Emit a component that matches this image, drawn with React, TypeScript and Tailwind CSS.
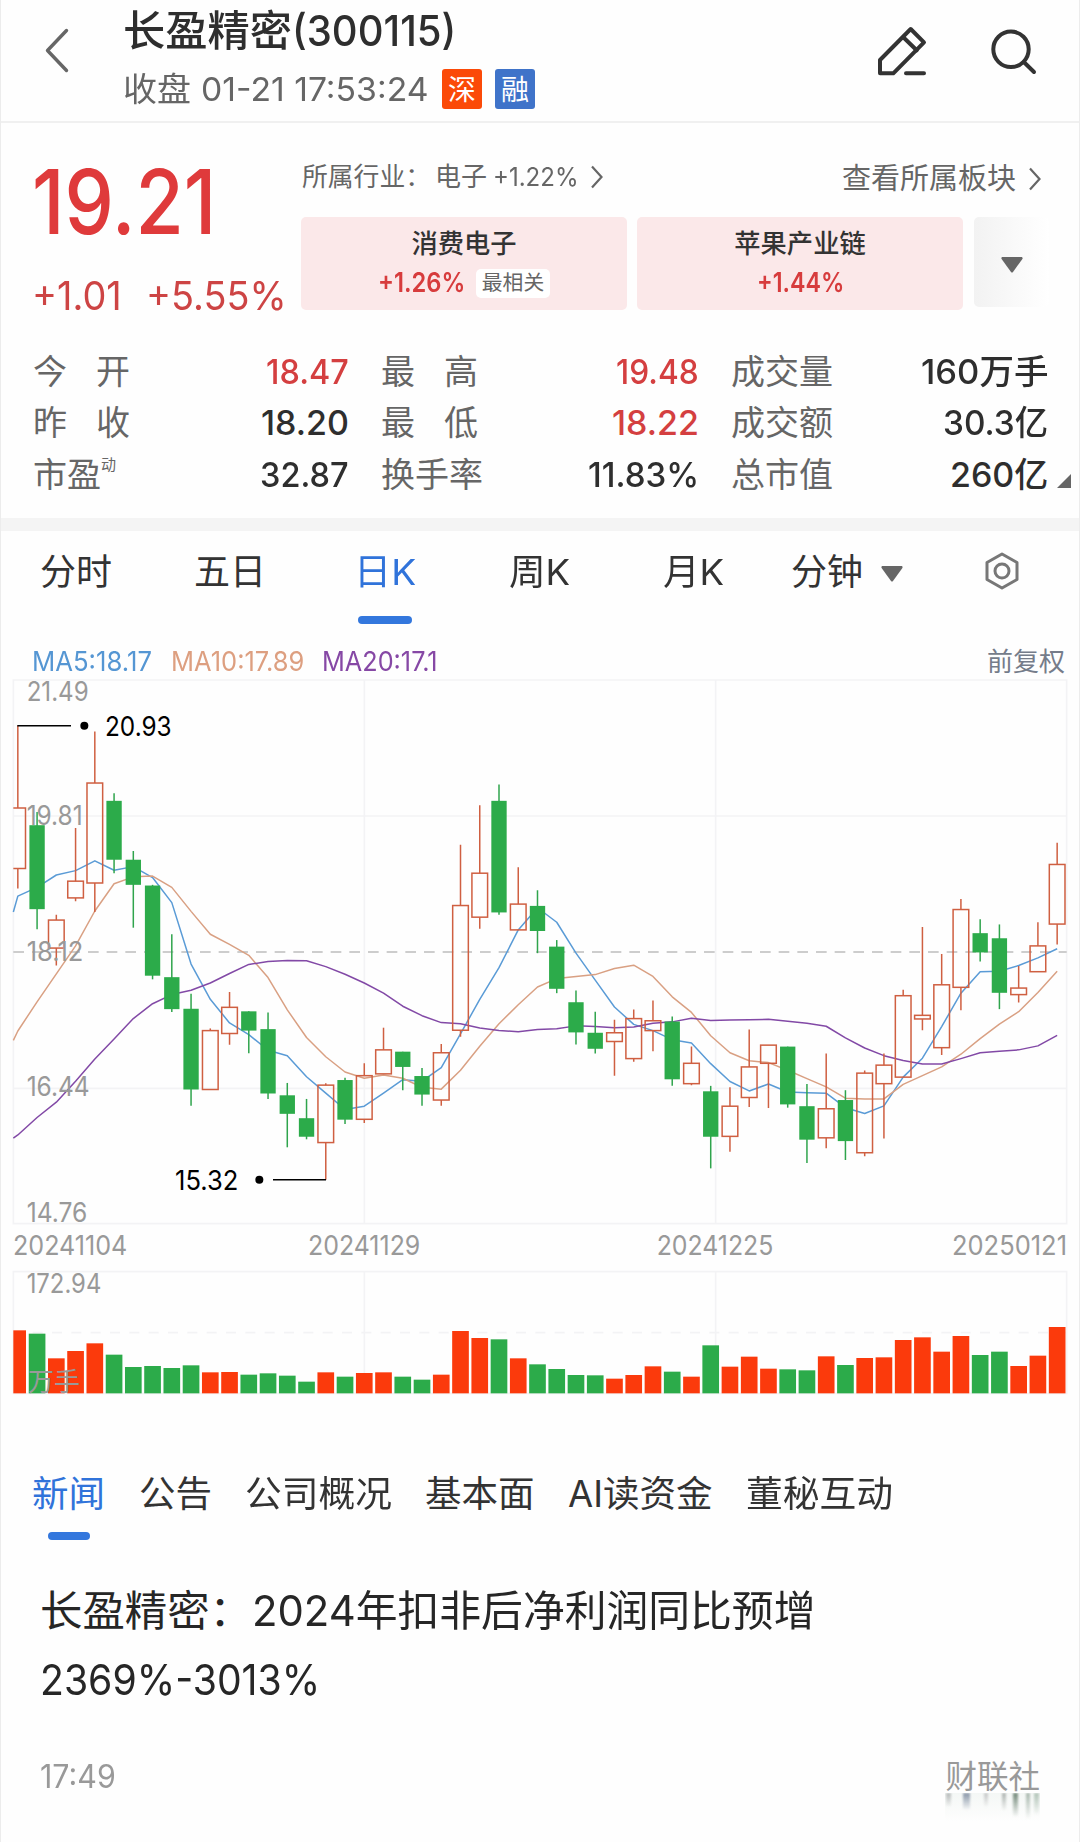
import { useLayoutEffect, useRef, useState } from 'react';
import type { ReactNode } from 'react';

type Candle = [up: number, high: number, top: number, bottom: number, low: number];

const candles: Candle[] = [
  [1, 152, 379, 545, 600], [0, 390, 426, 657, 712], [1, 672, 687, 764, 812], [1, 434, 580, 626, 635],
  [1, 168, 310, 585, 665], [0, 338, 359, 521, 558], [0, 497, 521, 590, 708], [0, 590, 592, 840, 850],
  [0, 726, 844, 932, 940], [0, 890, 931, 1153, 1198], [1, 985, 991, 1153, 1153], [1, 885, 927, 999, 1030],
  [0, 938, 938, 991, 1053], [0, 941, 987, 1164, 1179], [0, 1135, 1169, 1220, 1312], [0, 1179, 1232, 1283, 1290],
  [1, 1136, 1141, 1299, 1401], [0, 1121, 1127, 1236, 1248], [1, 1081, 1115, 1235, 1245], [1, 983, 1044, 1110, 1110],
  [0, 1049, 1049, 1091, 1155], [0, 1094, 1116, 1167, 1198], [1, 1028, 1052, 1182, 1198], [1, 480, 647, 990, 1008],
  [1, 371, 558, 679, 711], [0, 314, 359, 666, 672], [1, 542, 643, 714, 714], [0, 605, 648, 717, 778],
  [0, 742, 760, 876, 888], [0, 881, 913, 996, 1029], [0, 939, 997, 1041, 1054], [1, 961, 997, 1021, 1115],
  [1, 933, 958, 1068, 1077], [1, 908, 964, 991, 1048], [0, 952, 966, 1125, 1143], [1, 1035, 1081, 1137, 1141],
  [0, 1143, 1158, 1283, 1370], [1, 1147, 1199, 1282, 1324], [1, 988, 1091, 1175, 1201], [1, 1031, 1031, 1081, 1204],
  [0, 1035, 1035, 1194, 1203], [0, 1138, 1199, 1291, 1355], [1, 1054, 1206, 1286, 1315], [0, 1155, 1182, 1295, 1347],
  [1, 1101, 1108, 1327, 1337], [1, 1054, 1086, 1137, 1288], [1, 879, 895, 1119, 1119], [1, 706, 949, 959, 990],
  [1, 780, 865, 1038, 1058], [1, 629, 658, 872, 935], [0, 685, 723, 776, 801], [0, 699, 737, 887, 932],
  [1, 813, 874, 892, 914], [1, 693, 758, 829, 829], [1, 474, 534, 698, 754],
];

const ma5 = [
  621, 597, 563, 551, 524, 550, 540, 570, 639, 808, 905, 970, 1002, 1045, 1060, 1118, 1163, 1208, 1199, 1163, 1126,
  1130, 1093, 1000, 905, 818, 714, 653, 693, 778, 852, 926, 974, 991, 1016, 1025, 1082, 1131, 1157, 1138, 1160, 1162,
  1163, 1203, 1219, 1198, 1119, 1067, 980, 888, 829, 828, 812, 791, 766,
];
const ma10 = [
  992, 912, 835, 758, 662, 587, 568, 566, 597, 663, 726, 754, 784, 845, 934, 1010, 1063, 1105, 1122, 1113, 1122,
  1147, 1152, 1100, 1034, 972, 920, 871, 848, 842, 837, 820, 811, 842, 898, 941, 1005, 1052, 1074, 1079, 1100, 1123,
  1146, 1177, 1179, 1179, 1139, 1115, 1091, 1056, 1013, 973, 939, 886, 828,
];
const ma20 = [
  1278, 1230, 1188, 1130, 1069, 1014, 958, 917, 892, 880, 860, 834, 809, 801, 798, 799, 815, 836, 860, 888, 924,
  950, 969, 972, 984, 991, 994, 988, 986, 978, 980, 983, 981, 971, 967, 957, 963, 962, 961, 960, 965, 971,
  979, 1011, 1039, 1060, 1073, 1083, 1083, 1068, 1052, 1048, 1044, 1033, 1004,
];

const volumes = [
  189, 179, 105, 127, 150, 116, 79, 82, 76, 84, 63, 64, 56, 60, 53, 35, 63, 50, 61, 63, 50, 41, 56, 187, 166, 162,
  105, 87, 73, 55, 54, 44, 55, 81, 65, 50, 144, 80, 110, 74, 72, 69, 111, 85, 106, 108, 160, 168, 125, 172, 115, 125,
  82, 113, 199,
];

// chart space: 3 units per pixel
const cx = (i: number) => 53.5 + i * 57.74;
const py = (v: number) => Math.round(v * 10.906) / 10 + 1;
const linePath = (values: number[], start: number) =>
  `M40 ${py(start)} ` + values.map((v, i) => `L${cx(i).toFixed(1)} ${py(v)}`).join(' ');

interface FitProps {
  w: number;
  className?: string;
  children: ReactNode;
}

// Squeezes a single line of text into a fixed width
function Fit({ w, className = '', children }: FitProps) {
  const ref = useRef<HTMLSpanElement>(null);
  const [scale, setScale] = useState(1);

  useLayoutEffect(() => {
    if (ref.current) setScale(w / ref.current.offsetWidth);
  }, [w]);

  return (
    <span className={`inline-block shrink-0 whitespace-nowrap ${className}`} style={{ width: w }}>
      <span ref={ref} className="inline-block origin-left" style={{ transform: `scaleX(${scale})` }}>
        {children}
      </span>
    </span>
  );
}

function Chevron({ className = '' }: { className?: string }) {
  return (
    <svg className={className} width="14" height="24" viewBox="0 0 14 24" fill="none" stroke="#666" strokeWidth="2.2">
      <path d="M2 1.5 11.5 12 2 22.5" />
    </svg>
  );
}

function Header() {
  return (
    <header className="flex h-[123px] border-b-2 border-[#f0f0f0]">
      <svg className="mt-[28px] ml-[44px] shrink-0" width="26" height="45" viewBox="0 0 26 45" fill="none" stroke="#666" strokeWidth="3.4" strokeLinecap="round" strokeLinejoin="round">
        <path d="M22.5 2.5 3.5 22.5 22.5 42.5" />
      </svg>
      <div className="ml-[53px] flex-1">
        <div className="mt-[5px] flex h-[52px] text-[42px] leading-[52px] font-medium text-[#2e2e2e]">
          <Fit w={169}>长盈精密</Fit>
          <Fit w={164}>(300115)</Fit>
        </div>
        <div className="mt-[12px] flex h-[40px] items-center text-[33px] leading-[40px] text-[#666]">
          <Fit w={68}>收盘</Fit>
          <Fit w={228} className="ml-[10px]">01-21 17:53:24</Fit>
          <span className="ml-[13px] flex h-10 w-10 items-center justify-center rounded-[3px] bg-[#fb4a08] pt-px text-[28px] text-white">深</span>
          <span className="ml-[13px] flex h-10 w-10 items-center justify-center rounded-[3px] bg-[#3f73c9] pt-px text-[28px] text-white">融</span>
        </div>
      </div>
      <svg className="mt-[24px] shrink-0" width="56" height="56" viewBox="1 0 56 56" fill="none" stroke="#333" strokeWidth="4" strokeLinecap="round" strokeLinejoin="round">
        <path d="M36.7 5 50 18.3 19.3 49.3H6V36Z" />
        <path d="M29.3 13.3 42.7 26.3M32 49.2H50" />
      </svg>
      <svg className="mr-[37px] ml-[56px] mt-[24px] shrink-0" width="56" height="56" viewBox="1 0 56 56" fill="none" stroke="#333" strokeWidth="4" strokeLinecap="round">
        <circle cx="25" cy="25.3" r="17.7" />
        <path d="M37.8 38 48 48" />
      </svg>
    </header>
  );
}

function Quote() {
  return (
    <section className="flex h-[206px]">
      <div className="w-[301px] pl-[32px] text-[#df3a3b]">
        <div className="mt-[34px] h-[90px] text-[89px] leading-[90px] font-medium">
          <Fit w={184}>19.21</Fit>
        </div>
        <div className="mt-[25px] flex h-[48px] text-[40px] leading-[48px] text-[#cd4444]">
          <Fit w={90}>+1.01</Fit>
          <Fit w={141} className="ml-[24px]">+5.55%</Fit>
        </div>
      </div>
      <div className="flex-1">
        <div className="mt-[36px] flex h-[36px] items-center text-[26px] leading-[36px] text-[#666]">
          <span className="ml-px w-[133px] text-[25.8px]">所属行业：</span>
          <span className="w-[58px]">电子</span>
          <Fit w={86}>+1.22%</Fit>
          <Chevron className="ml-[11px]" />
          <span className="mt-[4px] ml-auto text-[29px]">查看所属板块</span>
          <Chevron className="mt-[3px] mr-[38px] ml-[12px]" />
        </div>
        <div className="mt-[22px] flex">
          <div className="h-[93px] w-[326px] rounded-[5px] bg-[#fbe8e9] pt-[8px] text-center">
            <div className="text-[26.3px] leading-[38px] font-medium text-[#333]">消费电子</div>
            <div className="mt-[2px] flex h-[36px] items-center justify-center gap-[11px]">
              <Fit w={87} className="text-left text-[27px] font-semibold text-[#d73c3d]">+1.26%</Fit>
              <span className="flex h-[29px] w-[74px] items-center justify-center rounded-[5px] bg-white text-[20.8px] text-[#666]">最相关</span>
            </div>
          </div>
          <div className="ml-[10px] h-[93px] w-[326px] rounded-[5px] bg-[#fbe8e9] pt-[8px] text-center">
            <div className="text-[26.3px] leading-[38px] font-medium text-[#333]">苹果产业链</div>
            <div className="mt-[2px] flex h-[36px] items-center justify-center">
              <Fit w={87} className="text-left text-[27px] font-semibold text-[#d73c3d]">+1.44%</Fit>
            </div>
          </div>
          <div className="ml-[11px] flex h-[90px] w-[75px] items-center rounded-[5px] bg-linear-to-r from-[#f2f2f2] to-white pt-[5px] pl-[27px]">
            <svg width="22" height="16" viewBox="0 0 22 16" fill="#666">
              <path d="M1 0H21Q22 1 21.4 2L12 15Q11 16 10 15L.6 2Q0 1 1 0Z" />
            </svg>
          </div>
        </div>
      </div>
    </section>
  );
}

interface Stat {
  label: string;
  value: string;
  w: number;
  red?: boolean;
  sup?: string;
}

const stats: Stat[][] = [
  [
    { label: '今开', value: '18.47', w: 83, red: true },
    { label: '昨收', value: '18.20', w: 88 },
    { label: '市盈', value: '32.87', w: 89, sup: '动' },
  ],
  [
    { label: '最高', value: '19.48', w: 83, red: true },
    { label: '最低', value: '18.22', w: 87, red: true },
    { label: '换手率', value: '11.83%', w: 111 },
  ],
  [
    { label: '成交量', value: '160万手', w: 127 },
    { label: '成交额', value: '30.3亿', w: 105 },
    { label: '总市值', value: '260亿', w: 98 },
  ],
];

const columnClass = ['ml-[33px] w-[316px]', 'ml-[32px] w-[318px]', 'ml-[32px] w-[317px]'];

function Stats() {
  return (
    <section className="relative flex h-[189px] pt-[17px]">
      {stats.map((column, c) => (
        <div key={c} className={columnClass[c]}>
          {column.map(({ label, value, w, red, sup }) => (
            <div key={label} className="flex h-[51.5px] items-center justify-between text-[34px] leading-[50px]">
              <span className="flex text-[#666]">
                {label.length === 2 && !sup ? (
                  <span className="flex gap-[29px]">
                    <span>{label[0]}</span>
                    <span>{label[1]}</span>
                  </span>
                ) : (
                  label
                )}
                {sup && <span className="-mt-[10px] text-[15px]">{sup}</span>}
              </span>
              <Fit w={w} className={`text-left font-medium ${red ? 'text-[#d43f40]' : 'text-[#2e2e2e]'}`}>{value}</Fit>
            </div>
          ))}
        </div>
      ))}
      <svg className="absolute top-[145px] left-[1057px]" width="15" height="15" viewBox="0 0 15 15" fill="#666">
        <path d="M14 0V14H0Z" />
      </svg>
    </section>
  );
}

function PeriodTabs() {
  return (
    <nav className="flex h-[98px] items-start pt-[16px] text-[36px] leading-[50px] text-[#333]">
      <span className="ml-[40px] w-[154px]">分时</span>
      <span className="w-[160px]">五日</span>
      <span className="w-[155px] text-[#3073da]">
        <Fit w={62}>日K</Fit>
        <span className="mt-[19px] ml-[4px] block h-[8px] w-[54px] rounded-full bg-[#3377dd]" />
      </span>
      <span className="w-[154px]"><Fit w={61}>周K</Fit></span>
      <span className="w-[128px]"><Fit w={61}>月K</Fit></span>
      <span>分钟</span>
      <svg className="mt-[19px] ml-[18px]" width="22" height="16" viewBox="0 0 22 16" fill="#666">
        <path d="M1 0H21Q22 1 21.4 2L12 15Q11 16 10 15L.6 2Q0 1 1 0Z" />
      </svg>
      <svg className="mt-[4px] ml-[80px]" width="38" height="40" viewBox="0 0 38 40" fill="none" stroke="#777" strokeWidth="3" strokeLinejoin="round">
        <path d="M19 3 34 11.5V28.5L19 37 4 28.5V11.5Z" />
        <circle cx="19" cy="20" r="7" />
      </svg>
    </nav>
  );
}

function MaLegend() {
  return (
    <div className="flex h-[41px] items-center pt-[24px] pl-[32px] text-[27px] leading-[34px]">
      <Fit w={120} className="text-[#5596d3]">MA5:18.17</Fit>
      <Fit w={133} className="ml-[19px] text-[#dd9f80]">MA10:17.89</Fit>
      <Fit w={116} className="ml-[18px] text-[#8648a5]">MA20:17.1</Fit>
      <span className="mr-[15px] ml-auto text-[26px] text-[#757c8a]">前复权</span>
    </div>
  );
}

const priceLabels = [
  { text: '21.49', x: 80, y: 94, w: 186 },
  { text: '19.81', x: 80, y: 464, w: 168 },
  { text: '18.12', x: 80, y: 873, w: 170 },
  { text: '16.44', x: 80, y: 1279, w: 189 },
  { text: '14.76', x: 80, y: 1656, w: 182 },
];

const dateLabels = [
  { text: '20241104', x: 39, w: 343 },
  { text: '20241129', x: 924, w: 337 },
  { text: '20241225', x: 1970, w: 350 },
  { text: '20250121', x: 2856, w: 345 },
];

function KLineChart() {
  return (
    <svg width="1080" height="740" viewBox="0 0 3240 2220" fill="none" fontSize="79">
      {/* price grid */}
      <g stroke="#f3f3f5" strokeWidth="5">
        <path d="M40 30H3200V1661H40ZM40 438H3200M40 1255H3200M1093 30V1661M2147 30V1661" />
        <path d="M40 1805H3200V2170H40ZM1093 1805V2170M2147 1805V2170" />
        <path d="M40 1988H3200" strokeDasharray="30 28" />
      </g>
      <path d="M40 846H3200" stroke="#bdbdbd" strokeWidth="4" strokeDasharray="32 24" />

      {/* moving averages */}
      <g strokeWidth="4.5" strokeLinejoin="round">
        <path d={linePath(ma5, 665)} stroke="#5a9bd6" />
        <path d={linePath(ma10, 1018)} stroke="#d9a083" />
        <path d={linePath(ma20, 1287)} stroke="#8249a6" />
      </g>

      {/* candles */}
      {candles.map(([up, ...prices], i) => {
        const x = cx(i);
        const [high, top, bottom, low] = prices.map(py);
        if (!up) {
          return (
            <g key={i}>
              <path d={`M${x} ${high}V${low}`} stroke="#2fa44c" strokeWidth="4.5" />
              <rect x={x - 23} y={top} width="46" height={bottom - top} fill="#2cab4a" />
            </g>
          );
        }
        return (
          <g key={i} stroke="#cf5f41" strokeWidth="4.5">
            <path d={`M${x} ${high}V${top}M${x} ${bottom}V${low}`} />
            {i === 0 ? (
              <path d={`M40 ${top}H${x + 23}V${bottom}H40`} />
            ) : (
              <rect x={x - 23.5} y={top} width="47" height={bottom - top} />
            )}
          </g>
        );
      })}

      {/* high / low markers */}
      <path d="M52 167H213M819 1529H978" stroke="#000" strokeWidth="4.5" />
      <g fill="#000">
        <circle cx="253" cy="167" r="12" />
        <circle cx="778" cy="1529" r="12" />
        <text x="315" y="197" fontSize="82" textLength="200" lengthAdjust="spacingAndGlyphs">20.93</text>
        <text x="525" y="1560" fontSize="82" textLength="190" lengthAdjust="spacingAndGlyphs">15.32</text>
      </g>

      {/* volume */}
      {volumes.map((v, i) => (
        <rect
          key={i}
          x={i === 0 ? 40 : cx(i) - 25}
          y={2170 - v}
          width={i === 0 ? 38 : 50}
          height={v}
          fill={candles[i][0] ? '#fb3a0c' : '#2cab4a'}
        />
      ))}

      <g fill="#999">
        {priceLabels.map(l => (
          <text key={l.text} x={l.x} y={l.y} textLength={l.w} lengthAdjust="spacingAndGlyphs">{l.text}</text>
        ))}
        {dateLabels.map(l => (
          <text key={l.text} x={l.x} y="1754" fontSize="82" textLength={l.w} lengthAdjust="spacingAndGlyphs">{l.text}</text>
        ))}
        <text x="80" y="1870" textLength="224" lengthAdjust="spacingAndGlyphs">172.94</text>
        <text x="84" y="2162" fontSize="78">万手</text>
      </g>
    </svg>
  );
}

function NewsTabs() {
  return (
    <nav className="mt-[59px] flex text-[36.5px] leading-[50px] text-[#333]">
      <span className="ml-[32px] w-[107px] text-[#3073da]">
        新闻
        <span className="mt-[13px] ml-[16px] block h-[8px] w-[42px] rounded-full bg-[#3377dd]" />
      </span>
      <span className="w-[106px]">公告</span>
      <span className="w-[180px]"><Fit w={147}>公司概况</Fit></span>
      <span className="w-[143px]">基本面</span>
      <span className="w-[178px]"><Fit w={145}>AI读资金</Fit></span>
      <Fit w={147}>董秘互动</Fit>
    </nav>
  );
}

const smears = [
  'left-[1px] h-[14px] w-[5px] bg-linear-to-b from-[#b4b8b8] to-transparent',
  'left-[18px] h-[17px] w-[7px] bg-linear-to-b from-[#8996a8] to-transparent',
  'left-[39px] h-[14px] w-[4px] bg-linear-to-b from-[#c4c6c6] to-transparent',
  'left-[57px] h-[18px] w-[4px] bg-linear-to-b from-[#adb3b0] to-transparent',
  'left-[68px] h-[24px] w-[5px] bg-linear-to-b from-[#74897a] to-transparent',
  'left-[81px] h-[26px] w-[4px] bg-linear-to-b from-[#a9b8ae] to-transparent',
  'left-[89px] h-[22px] w-[5px] bg-linear-to-b from-[#b2c4b8] to-transparent',
];

function NewsItem() {
  return (
    <article className="mt-[37px] pl-[40px] text-[42.4px] leading-[68.5px] text-[#262626]">
      <div className="flex">
        <span className="w-[212px] whitespace-nowrap">长盈精密：</span>
        <Fit w={563}>2024年扣非后净利润同比预增</Fit>
      </div>
      <Fit w={280}>2369%-3013%</Fit>
      <footer className="mt-[38px] mr-[40px] flex justify-between text-[32px] leading-[50px] text-[#999]">
        <Fit w={76}>17:49</Fit>
        <span className="relative text-[31.5px]">
          财联社
          <span className="absolute top-[41px] left-0 block h-[28px] w-full overflow-hidden bg-linear-to-b from-[#f4f7f5] to-[#fefefe]">
            {smears.map(s => (
              <span key={s} className={`absolute top-0 blur-[1px] ${s}`} />
            ))}
          </span>
        </span>
      </footer>
    </article>
  );
}

export default function App() {
  return (
    <div className="h-[1842px] w-[1080px] overflow-hidden border-x border-[#ececec] bg-[#fefefe] font-['Inter','Noto_Sans_CJK_SC',sans-serif]">
      <div className="-mx-px">
        <Header />
        <Quote />
        <Stats />
        <div className="h-[13px] bg-[#f4f4f4]" />
        <PeriodTabs />
        <MaLegend />
        <KLineChart />
        <NewsTabs />
        <NewsItem />
      </div>
    </div>
  );
}
